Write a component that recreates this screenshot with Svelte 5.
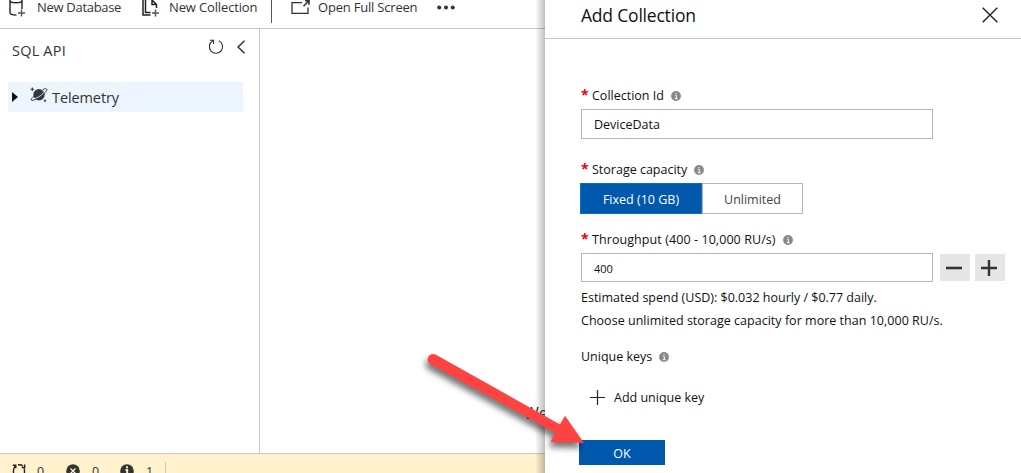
<script>
  const estimate = 'Estimated spend (USD): $0.032 hourly / $0.77 daily.';
  const hint = 'Choose unlimited storage capacity for more than 10,000 RU/s.';
</script>

{#snippet info()}
  <svg class="info" width="10" height="10" viewBox="0 0 10 10"><circle cx="5" cy="5" r="4.9" fill="#888" /><path d="M4.2 4.4H5.300V7.600M3.800 7.700h2.800M5 1.900v1.300" stroke="#fff" stroke-width="1" fill="none" /></svg>
{/snippet}

<div class="app">
  <main>
    <header>
      <svg class="db" width="18" height="18" viewBox="0 0 18 18" fill="none" stroke="#222" stroke-width="1.4"><path d="M2 0v12.500c0 1.700 2 2.600 6.500 2.600M2 1c1 2.400 11 2.400 12 0M14 0v9" /><path d="M13.500 9.500v7M10 13h7" stroke="#555" /></svg>
      <span class="t newdb">New Database</span>
      <svg class="col" width="19" height="18" viewBox="0 0 19 18" fill="none" stroke="#222" stroke-width="1.5"><path d="M4.500 0v12.500h5M2 0v15h7.500M15.500 8V4.500L11 0M11 0v4.500h4.500" /><path d="M14.500 9.500v7M11 13h7" stroke="#555" /></svg>
      <span class="t newcol">New Collection</span>
      <i class="sep"></i>
      <svg class="open" width="20" height="16" viewBox="0 0 20 16" fill="none" stroke="#333"><path d="M11 2.700H1v10.600h16V7.500" stroke-width="1.300" /><path d="M12.500 6.300L18 .8M14 .8h4v4" stroke-width="1.600" /></svg>
      <span class="t full">Open Full Screen</span>
      <svg class="dots" width="18" height="5" viewBox="0 0 18 5" fill="#333"><circle cx="2.2" cy="2.5" r="2" /><circle cx="9" cy="2.5" r="2" /><circle cx="15.8" cy="2.5" r="2" /></svg>
    </header>
    <div class="work">
      <aside>
        <div class="title">
          <span class="t api">SQL API</span>
          <svg class="reload" width="16" height="17" viewBox="0 0 16 17" fill="none" stroke="#333" stroke-width="1.100"><path d="M10.800 2.700A6.600 6.600 0 1 1 4.600 3M1.800 2.200h3.700v3.700" /></svg>
          <svg class="chev" width="9" height="14" viewBox="0 0 9 14" fill="none" stroke="#222" stroke-width="1.3"><path d="M7.500 .7L1 7L7.500 13.3" /></svg>
        </div>
        <div class="node">
          <svg width="6" height="10" viewBox="0 0 6 10"><path d="M0 0l6 5-6 5z" fill="#111" /></svg>
          <svg class="planet" width="18" height="16" viewBox="0 0 18 16"><circle cx="9" cy="7.800" r="5.700" fill="#343840" /><path d="M3.800 9.200C.8 11.700.5 13.300 2 13.400c4 .2 15.600-8.600 14.900-11-.3-1-2-.8-4 .1" fill="none" stroke="#343840" stroke-width="1" /><path d="M3.400 12C8 11 13 7.400 15 4" fill="none" stroke="#edf5ff" stroke-width=".8" /><path d="M2.300 .5v3.500M.5 2.200h3.600M15 12.500v2.400M13.800 13.700h2.400" stroke="#343840" stroke-width="1.100" /></svg>
          <span class="t tele">Telemetry</span>
        </div>
      </aside>
      <section><span class="t welcome">We</span></section>
    </div>
    <footer>
      <svg class="sync" width="14" height="14" viewBox="0 0 14 14" fill="none" stroke="#222" stroke-width="1.400"><path d="M.8 1.200h3v3M3.500 1.800C1.500 4 1 7.500 2 11M6 1c2-.5 3.500-.2 5 1M12 4.500c.8 2 .6 4.500 0 7M12.700 .5v3H9.700" /></svg>
      <span class="t n1">0</span>
      <svg class="err" width="14" height="14" viewBox="0 0 14 14"><circle cx="7" cy="7" r="6.800" fill="#333" /><path d="M4.500 4.500l5 5m0-5l-5 5" stroke="#fff2cc" stroke-width="1.300" /></svg>
      <span class="t n2">0</span>
      <svg class="inf" width="14" height="14" viewBox="0 0 14 14"><circle cx="7" cy="7" r="6.800" fill="#333" /><path d="M5.500 6H7.200v6M7 2.300v2" stroke="#fff2cc" stroke-width="1.900" fill="none" /></svg>
      <span class="t n3">1</span>
      <i class="fsep"></i>
    </footer>
    <div class="shade"></div>
  </main>

  <div class="panel">
    <div class="head">
      <span class="t add">Add Collection</span>
      <svg width="16" height="16" viewBox="0 0 16 16"><path d="M.7.7l14.600 14.600m0-14.600L.7 15.300" stroke="#222" stroke-width="1.400" /></svg>
    </div>
    <div class="form">
      <div class="label l1"><b>*</b><span class="t cid">Collection Id</span>{@render info()}</div>
      <div class="input"><span class="t dev">DeviceData</span></div>
      <div class="label l2"><b>*</b><span class="t sto">Storage capacity</span>{@render info()}</div>
      <div class="switch"><div class="on"><span class="t fix">Fixed (10 GB)</span></div><div class="off"><span class="t unl">Unlimited</span></div></div>
      <div class="label l3"><b>*</b><span class="t thr">Throughput (400 - 10,000 RU/s)</span>{@render info()}</div>
      <div class="row">
        <div class="input"><span class="t num">400</span></div>
        <div class="step"><svg width="16" height="16" viewBox="0 0 16 16"><path d="M0 8h16" stroke="#333" stroke-width="2.600" /></svg></div>
        <div class="step second"><svg width="16" height="16" viewBox="0 0 16 16"><path d="M0 8h16M8 0v16" stroke="#333" stroke-width="2.400" /></svg></div>
      </div>
      <div class="line e1"><span class="t est">{estimate}</span></div>
      <div class="line"><span class="t cho">{hint}</span></div>
      <div class="label l4"><span class="t uni">Unique keys</span>{@render info()}</div>
      <div class="addkey"><svg width="15" height="15" viewBox="0 0 15 15"><path d="M0 7.500h15M7.500 0v15" stroke="#222" stroke-width="1.200" /></svg><span class="t auk">Add unique key</span></div>
      <div class="ok"><span class="t okt">OK</span></div>
    </div>
  </div>

  <svg class="arrow" width="180" height="120" viewBox="420 345 180 120">
    <path d="M435.500 354.600L560 424.400L565 415.700L584 443L550.500 442L555.500 433L430.500 364.200A5.400 5.400 0 0 1 435.500 354.600Z" fill="#ff4343" />
  </svg>
</div>

<style>
  :global(body) { margin: 0; overflow: hidden; background: #fff; }
  .app { position: relative; display: flex; width: 1021px; height: 473px; overflow: hidden; font: 12.500px/18px "Open Sans", "Noto Sans", sans-serif; color: #111; }
  svg { display: block; flex: none; }
  .t { white-space: nowrap; flex: none; }
  main { position: relative; width: 545px; height: 473px; display: flex; flex-direction: column; overflow: hidden; }
  header { height: 28px; flex: none; border-bottom: 1px solid #c8c8c8; display: flex; align-items: flex-start; color: #333; font-size: 13px; line-height: 14px; }
  .db { margin-left: 8px; }
  .newdb { margin-left: 11px; width: 104px; letter-spacing: -.3px; }
  .newcol { margin-left: 9px; width: 102px; letter-spacing: -.14px; }
  .sep { width: 1px; height: 23px; background: #555; }
  .open { margin-left: 19px; }
  .full { margin-left: 7px; width: 119px; letter-spacing: -.2px; }
  .dots { margin-top: 5px; }
  .work { flex: 1; display: flex; min-height: 0; }
  aside { width: 259px; border-right: 1px solid #c8c8c8; flex: none; }
  .title { display: flex; height: 53px; padding: 9px 0 0 12px; box-sizing: border-box; color: #333; }
  .api { width: 196px; font-size: 14.500px; line-height: 25px; letter-spacing: .2px; }
  .chev { margin: 2px 0 0 13px; }
  .node { width: 235px; height: 30px; margin-left: 8px; background: #edf5ff; display: flex; align-items: center; box-sizing: border-box; padding-left: 4px; color: #333; }
  .planet { margin: -4px 4px 0 12px; }
  .tele { font-size: 14.500px; letter-spacing: -.1px; padding-top: 2px; }
  section { flex: 1; padding: 375px 0 0 264px; }
  .welcome { font-size: 16px; color: #333; }
  footer { height: 19px; flex: none; border-top: 1px solid #c8c8c8; background: #fff2cc; display: flex; padding-left: 12px; color: #333; }
  footer svg { margin-top: 10px; }
  footer .t { margin-top: 9px; width: 12px; }
  .n1 { margin-left: 11px; } .err { margin-left: 17px; } .n2 { margin-left: 12px; } .inf { margin-left: 16px; } .n3 { margin-left: 12px; }
  .fsep { width: 1px; background: #c8c8c8; margin: 8px 0 0 7px; }
  .shade { position: absolute; right: 0; top: 0; width: 10px; height: 473px; background: linear-gradient(to right, transparent, rgba(0, 0, 0, .25)); }
  .panel { width: 476px; height: 473px; background: #fff; }
  .head { height: 38px; border-bottom: 1px solid #c8c8c8; display: flex; justify-content: space-between; padding: 0 23px 0 36px; }
  .head svg { margin-top: 7px; }
  .add { font-size: 17.500px; line-height: 31px; letter-spacing: -.2px; }
  .form { padding-left: 36px; }
  .label { height: 18px; display: flex; align-items: center; }
  .label b { width: 11px; color: #e00; font: 700 14px/18px "Open Sans", sans-serif; height: 18px; margin-top: -2px; }
  .info { margin: 0 0 0 7px; }
  .thr { letter-spacing: .08px; }
  .l1 { margin-top: 48px; }
  .input { width: 352px; height: 30px; border: 1px solid #b5b5b5; box-sizing: border-box; padding: 2px 0 0 12px; display: flex; align-items: center; flex: none; }
  .l1 + .input { margin-top: 4px; }
  .l2 { margin-top: 22px; }
  .switch { margin: 4px 0 0 -1px; display: flex; width: 223px; height: 31px; }
  .on, .off { box-sizing: border-box; display: flex; align-items: center; justify-content: center; padding-top: 2px; }
  .on { width: 122px; background: #0058ad; border: 1px solid #0072c6; color: #fff; }
  .off { width: 101px; border: 1px solid #b5b5b5; color: #444; }
  .l3 { margin-top: 17px; }
  .row { display: flex; margin-top: 4px; height: 29px; }
  .row .input { height: 29px; }
  .num { font-size: 11px; }
  .step { width: 30px; height: 27px; background: #e6e6e6; margin: 1px 0 0 7px; display: flex; align-items: center; justify-content: center; }
  .step svg { margin-left: -2px; }
  .step.second { margin-left: 5px; }
  .line { height: 23px; line-height: 23px; }
  .cho { letter-spacing: .02px; }
  .e1 { margin-top: 4px; }
  .l4 { margin-top: 16px; }
  .addkey { display: flex; align-items: center; margin: 22px 0 0 9px; height: 18px; }
  .auk { margin-left: 9px; padding-top: 1px; }
  .ok { width: 86px; height: 25px; background: #0058ad; margin: 34px 0 0 -2px; color: #fff; display: flex; align-items: center; justify-content: center; }
  .okt { padding-top: 2px; }
  .arrow { position: absolute; left: 420px; top: 345px; filter: drop-shadow(-2px 5px 3px rgba(0, 0, 0, .55)); }
</style>
